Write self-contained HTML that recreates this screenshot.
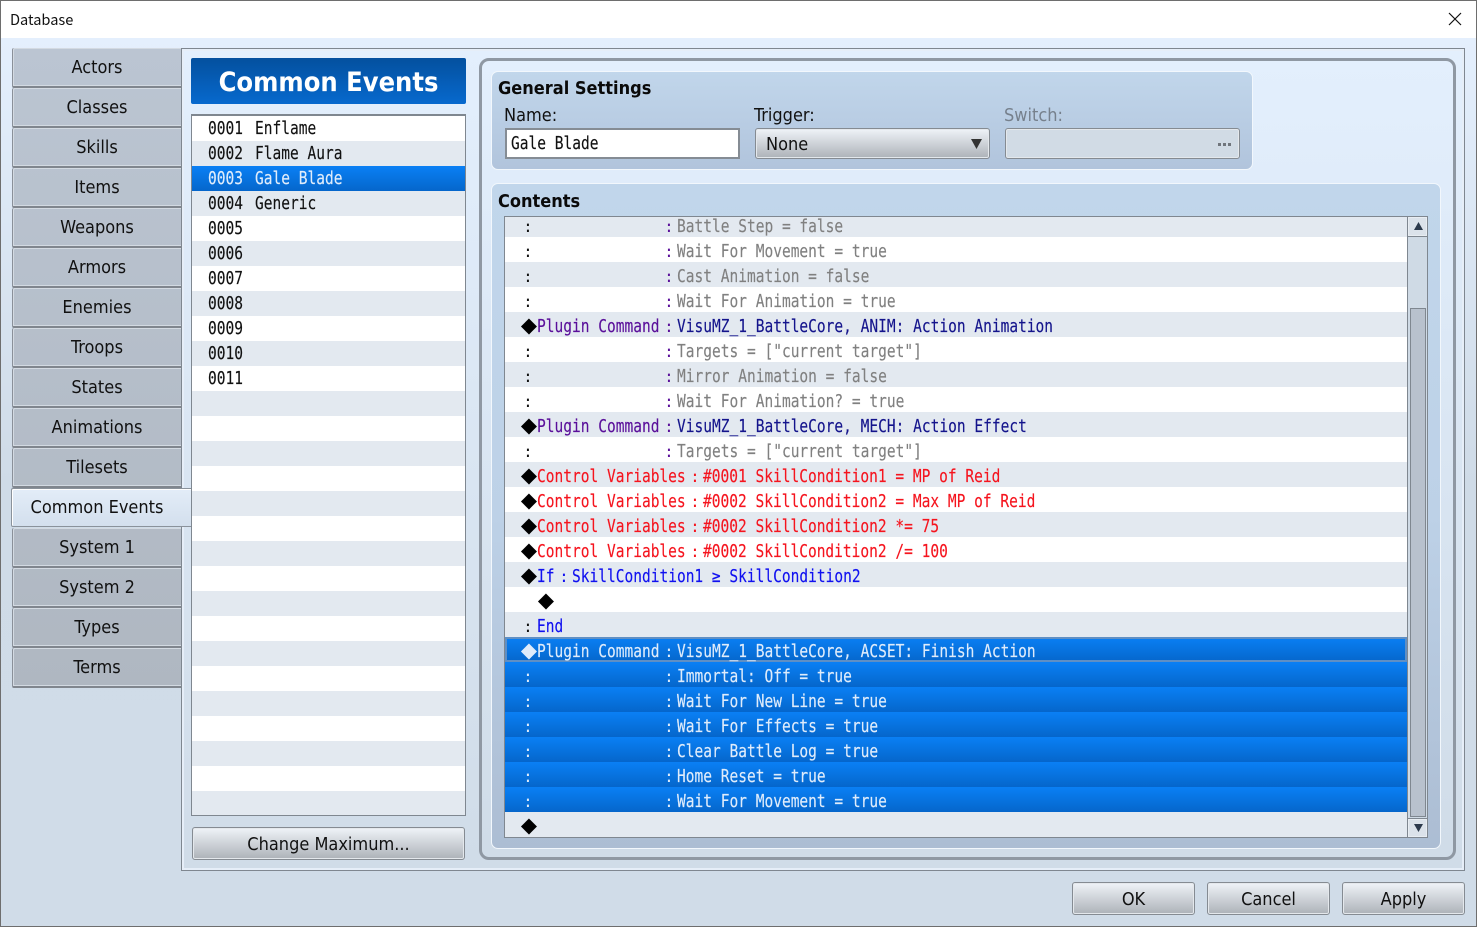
<!DOCTYPE html>
<html><head><meta charset="utf-8"><title>Database</title>
<style>
html,body{margin:0;padding:0}
body{width:1477px;height:927px;overflow:hidden;position:relative;background:#fff;font-family:"DejaVu Sans Condensed","DejaVu Sans","Liberation Sans",sans-serif;font-stretch:condensed;color:#111}
div,span{box-sizing:border-box}
.a{position:absolute}
#bg{left:0;top:38px;width:1477px;height:888px;background:linear-gradient(#e4effd,#cfdbe7 50%,#d0dce8)}
#frame{left:0;top:0;width:1477px;height:927px;border:1px solid #6e6e6e;z-index:50;pointer-events:none}
#tt{left:10px;top:10px;font:14.6px/20px "Noto Sans CJK JP","Liberation Sans",sans-serif;font-stretch:normal;color:#111}
#panel{left:181px;top:48px;width:1284px;height:823px;border:1px solid #7f8790;box-shadow:inset 0 0 0 2px #e6eef8;background:linear-gradient(#e3effd,#d0dce8)}
.tab{position:absolute;left:12px;width:169px;height:40px;border:0;border-left:1px solid #8a9099;border-bottom:2px solid #80868e;box-shadow:inset 1px 1px 0 #d3dae2,inset 0 -1px 0 #d3dae2;background:linear-gradient(#bbc5d2 5%,#afb7c1 74%) fixed;text-align:center;font-size:18px;line-height:40px;color:#111;border-radius:2px 0 0 2px}
.tab.s{left:11px;width:180px;height:39px;line-height:38px;background:linear-gradient(#e3edf8,#d3dfed);border:0;border-left:1px solid #8a929b;border-top:1px solid #8a929b;border-bottom:1px solid #8a929b;box-shadow:inset 1px 1px 0 #fff;padding-right:9px;z-index:2}
#head{left:191px;top:58px;width:275px;height:46px;border-radius:2px;background:linear-gradient(#04509e,#0769ce);color:#fff;font-weight:bold;font-size:27px;line-height:50px;text-align:center}
#list{left:191px;top:114px;width:275px;height:702px;border:1px solid #7f8790;border-top-width:2px;overflow:hidden;background:#e3e9f0}
.l{position:absolute;left:0;width:273px;height:25px}
.w{background:#fff}.g{background:#e3e9f0}
.sel{background:linear-gradient(#0a80f5,#0566cb)}
.m{position:absolute;top:0;font:18px/26px "DejaVu Sans Mono","Liberation Mono",monospace;font-stretch:normal;transform:scaleX(.807);transform-origin:0 50%;white-space:pre;color:#111;-webkit-text-stroke:.15px currentColor}
.l .m{top:0}
.r .m{top:2px}
.c{position:absolute;top:2px;width:10px;text-align:center;font:16px/25px "DejaVu Sans Mono",monospace;font-stretch:normal;color:#111}
.btn{position:absolute;border:1px solid #858b92;border-radius:3px;box-shadow:inset 0 0 0 1px #e4e8ec;background:linear-gradient(#eff3f8,#adb2b8);text-align:center;font-size:18px;line-height:33px;color:#111}
#gb{left:479px;top:58px;width:977px;height:802px;border:3px solid #8f98a3;border-radius:10px;background:linear-gradient(#e3effd,#d0dce8)}
.grp{position:absolute;border:1px solid #f2f7fc;border-radius:7px}
#g1{left:491px;top:71px;width:762px;height:99px;background:linear-gradient(#c1d6eb,#b1c4dc)}
#g2{left:491px;top:183px;width:950px;height:666px;background:linear-gradient(#c1d6eb,#bdd1e7 50%,#acbdd3)}
.h{position:absolute;font-weight:bold;font-size:18px;line-height:22px;color:#0a0a0a}
.lb{position:absolute;font-size:18px;line-height:20px;color:#111}
#name{left:505px;top:128px;width:235px;height:31px;background:#fff;border:2px solid #858c94}
#trig{left:755px;top:128px;width:235px;height:31px;text-align:left;padding-left:10px;line-height:32px}
#sw{left:1005px;top:128px;width:235px;height:31px;background:#d1dbe5;border:1px solid #858b92;border-radius:3px;box-shadow:inset 0 0 0 1px #e4e8ec}
#clip{left:505px;top:217px;width:902px;height:620px;overflow:hidden;background:#e3e9f0}
#box{left:504px;top:216px;width:924px;height:622px;border:1px solid #7f8790}
.r{position:absolute;left:0;width:902px;height:25px;overflow:hidden}
.d{position:absolute;top:1px;left:13px;width:22px;text-align:center;font:21px/25px "DejaVu Sans",sans-serif;font-stretch:normal;color:#000}
.v{color:#808080}.p{color:#5a0f9a}.n{color:#14148c}.re{color:#f5141e}.bl{color:#1010f0}
.pu{color:#5a0f9a}
.sel .m,.sel .c,.sel .d{color:#dfecfb}
#sb{left:1407px;top:217px;width:20px;height:620px;background:#cfdae5;border-left:1px solid #7f8790}
</style></head><body>
<div class="a" id="bg"></div>
<div class="a" id="tt">Database</div>
<svg class="a" style="left:1448px;top:12px" width="14" height="14" viewBox="0 0 14 14"><path d="M1 1L13 13M13 1L1 13" stroke="#111" stroke-width="1.2" fill="none"/></svg>
<div class="a" id="panel"></div>

<div class="tab" style="top:48px">Actors</div>
<div class="tab" style="top:88px">Classes</div>
<div class="tab" style="top:128px">Skills</div>
<div class="tab" style="top:168px">Items</div>
<div class="tab" style="top:208px">Weapons</div>
<div class="tab" style="top:248px">Armors</div>
<div class="tab" style="top:288px">Enemies</div>
<div class="tab" style="top:328px">Troops</div>
<div class="tab" style="top:368px">States</div>
<div class="tab" style="top:408px">Animations</div>
<div class="tab" style="top:448px">Tilesets</div>
<div class="tab s" style="top:488px">Common Events</div>
<div class="tab" style="top:528px">System 1</div>
<div class="tab" style="top:568px">System 2</div>
<div class="tab" style="top:608px">Types</div>
<div class="tab" style="top:648px">Terms</div>

<div class="a" id="head">Common Events</div>
<div class="a" id="list">
<div class="l w" style="top:0"><span class="m" style="left:16px">0001</span><span class="m" style="left:63px">Enflame</span></div>
<div class="l g" style="top:25px"><span class="m" style="left:16px">0002</span><span class="m" style="left:63px">Flame Aura</span></div>
<div class="l sel" style="top:50px"><span class="m" style="left:16px;color:#dfecfb">0003</span><span class="m" style="left:63px;color:#dfecfb">Gale Blade</span></div>
<div class="l g" style="top:75px"><span class="m" style="left:16px">0004</span><span class="m" style="left:63px">Generic</span></div>
<div class="l w" style="top:100px"><span class="m" style="left:16px">0005</span></div>
<div class="l g" style="top:125px"><span class="m" style="left:16px">0006</span></div>
<div class="l w" style="top:150px"><span class="m" style="left:16px">0007</span></div>
<div class="l g" style="top:175px"><span class="m" style="left:16px">0008</span></div>
<div class="l w" style="top:200px"><span class="m" style="left:16px">0009</span></div>
<div class="l g" style="top:225px"><span class="m" style="left:16px">0010</span></div>
<div class="l w" style="top:250px"><span class="m" style="left:16px">0011</span></div>
<div class="l w" style="top:300px"></div><div class="l w" style="top:350px"></div><div class="l w" style="top:400px"></div><div class="l w" style="top:450px"></div><div class="l w" style="top:500px"></div><div class="l w" style="top:550px"></div><div class="l w" style="top:600px"></div><div class="l w" style="top:650px"></div>
</div>
<div class="btn" style="left:192px;top:827px;width:273px;height:33px">Change Maximum...</div>

<div class="a" id="gb"></div>
<div class="grp" id="g1"></div>
<div class="h" style="left:498px;top:78px">General Settings</div>
<div class="lb" style="left:504px;top:106px">Name:</div>
<div class="lb" style="left:754px;top:106px">Trigger:</div>
<div class="lb" style="left:1004px;top:106px;color:#76808c">Switch:</div>
<div class="a" id="name"><span class="m" style="left:4px;top:1px">Gale Blade</span></div>
<div class="btn" id="trig">None<svg class="a" style="left:215px;top:10px" width="11" height="10"><path d="M0 0H11L5.500 10Z" fill="#333"/></svg></div>
<div class="a" id="sw"><svg class="a" style="left:212px;top:14px" width="14" height="4"><path d="M0 0h3v3H0zM5 0h3v3H5zM10 0h3v3h-3z" fill="#70757c"/></svg></div>

<div class="grp" id="g2"></div>
<div class="h" style="left:498px;top:191px">Contents</div>
<div class="a" id="clip">
<div class="r g" style="top:-5px"><span class="c" style="left:18px">:</span><span class="c pu" style="left:159px">:</span><span class="m v" style="left:172px">Battle Step = false</span></div>
<div class="r w" style="top:20px"><span class="c" style="left:18px">:</span><span class="c pu" style="left:159px">:</span><span class="m v" style="left:172px">Wait For Movement = true</span></div>
<div class="r g" style="top:45px"><span class="c" style="left:18px">:</span><span class="c pu" style="left:159px">:</span><span class="m v" style="left:172px">Cast Animation = false</span></div>
<div class="r w" style="top:70px"><span class="c" style="left:18px">:</span><span class="c pu" style="left:159px">:</span><span class="m v" style="left:172px">Wait For Animation = true</span></div>
<div class="r g" style="top:95px"><span class="d">◆</span><span class="m p" style="left:32px">Plugin Command</span><span class="c pu" style="left:159px">:</span><span class="m n" style="left:172px">VisuMZ_1_BattleCore, ANIM: Action Animation</span></div>
<div class="r w" style="top:120px"><span class="c" style="left:18px">:</span><span class="c pu" style="left:159px">:</span><span class="m v" style="left:172px">Targets = ["current target"]</span></div>
<div class="r g" style="top:145px"><span class="c" style="left:18px">:</span><span class="c pu" style="left:159px">:</span><span class="m v" style="left:172px">Mirror Animation = false</span></div>
<div class="r w" style="top:170px"><span class="c" style="left:18px">:</span><span class="c pu" style="left:159px">:</span><span class="m v" style="left:172px">Wait For Animation? = true</span></div>
<div class="r g" style="top:195px"><span class="d">◆</span><span class="m p" style="left:32px">Plugin Command</span><span class="c pu" style="left:159px">:</span><span class="m n" style="left:172px">VisuMZ_1_BattleCore, MECH: Action Effect</span></div>
<div class="r w" style="top:220px"><span class="c" style="left:18px">:</span><span class="c pu" style="left:159px">:</span><span class="m v" style="left:172px">Targets = ["current target"]</span></div>
<div class="r g" style="top:245px"><span class="d">◆</span><span class="m re" style="left:32px">Control Variables</span><span class="c re" style="left:185px">:</span><span class="m re" style="left:198px">#0001 SkillCondition1 = MP of Reid</span></div>
<div class="r w" style="top:270px"><span class="d">◆</span><span class="m re" style="left:32px">Control Variables</span><span class="c re" style="left:185px">:</span><span class="m re" style="left:198px">#0002 SkillCondition2 = Max MP of Reid</span></div>
<div class="r g" style="top:295px"><span class="d">◆</span><span class="m re" style="left:32px">Control Variables</span><span class="c re" style="left:185px">:</span><span class="m re" style="left:198px">#0002 SkillCondition2 *= 75</span></div>
<div class="r w" style="top:320px"><span class="d">◆</span><span class="m re" style="left:32px">Control Variables</span><span class="c re" style="left:185px">:</span><span class="m re" style="left:198px">#0002 SkillCondition2 /= 100</span></div>
<div class="r g" style="top:345px"><span class="d">◆</span><span class="m bl" style="left:32px">If</span><span class="c bl" style="left:54px">:</span><span class="m bl" style="left:67px">SkillCondition1 ≥ SkillCondition2</span></div>
<div class="r w" style="top:370px"><span class="d" style="left:30px">◆</span></div>
<div class="r g" style="top:395px"><span class="c" style="left:18px">:</span><span class="m bl" style="left:32px">End</span></div>
<div class="r sel" style="top:420px;box-shadow:inset 0 0 0 2px #5f8fc4"><span class="d">◆</span><span class="m" style="left:32px">Plugin Command</span><span class="c" style="left:159px">:</span><span class="m" style="left:172px">VisuMZ_1_BattleCore, ACSET: Finish Action</span></div>
<div class="r sel" style="top:445px"><span class="c" style="left:18px">:</span><span class="c" style="left:159px">:</span><span class="m" style="left:172px">Immortal: Off = true</span></div>
<div class="r sel" style="top:470px"><span class="c" style="left:18px">:</span><span class="c" style="left:159px">:</span><span class="m" style="left:172px">Wait For New Line = true</span></div>
<div class="r sel" style="top:495px"><span class="c" style="left:18px">:</span><span class="c" style="left:159px">:</span><span class="m" style="left:172px">Wait For Effects = true</span></div>
<div class="r sel" style="top:520px"><span class="c" style="left:18px">:</span><span class="c" style="left:159px">:</span><span class="m" style="left:172px">Clear Battle Log = true</span></div>
<div class="r sel" style="top:545px"><span class="c" style="left:18px">:</span><span class="c" style="left:159px">:</span><span class="m" style="left:172px">Home Reset = true</span></div>
<div class="r sel" style="top:570px"><span class="c" style="left:18px">:</span><span class="c" style="left:159px">:</span><span class="m" style="left:172px">Wait For Movement = true</span></div>
<div class="r g" style="top:595px"><span class="d">◆</span></div>
</div>
<div class="a" id="sb">
<div class="a" style="left:0;top:0;width:19px;height:20px;background:#dbe2ea;border-bottom:1px solid #7f8790;box-shadow:inset 0 0 0 1px #e8edf2"><svg class="a" style="left:6px;top:5px" width="9" height="8"><path d="M4.500 0L9 8H0Z" fill="#2c3a4c"/></svg></div>
<div class="a" style="left:2px;top:91px;width:16px;height:509px;background:#b8c1cd;border:1px solid #7f8790"></div>
<div class="a" style="left:0;top:601px;width:19px;height:19px;background:#dbe2ea;border-top:1px solid #7f8790;box-shadow:inset 0 0 0 1px #e8edf2"><svg class="a" style="left:6px;top:5px" width="9" height="8"><path d="M0 0H9L4.500 8Z" fill="#2c3a4c"/></svg></div>
</div>
<div class="a" id="box"></div>

<div class="btn" style="left:1072px;top:882px;width:123px;height:33px">OK</div>
<div class="btn" style="left:1207px;top:882px;width:123px;height:33px">Cancel</div>
<div class="btn" style="left:1342px;top:882px;width:123px;height:33px">Apply</div>
<div class="a" id="frame"></div>
</body></html>
